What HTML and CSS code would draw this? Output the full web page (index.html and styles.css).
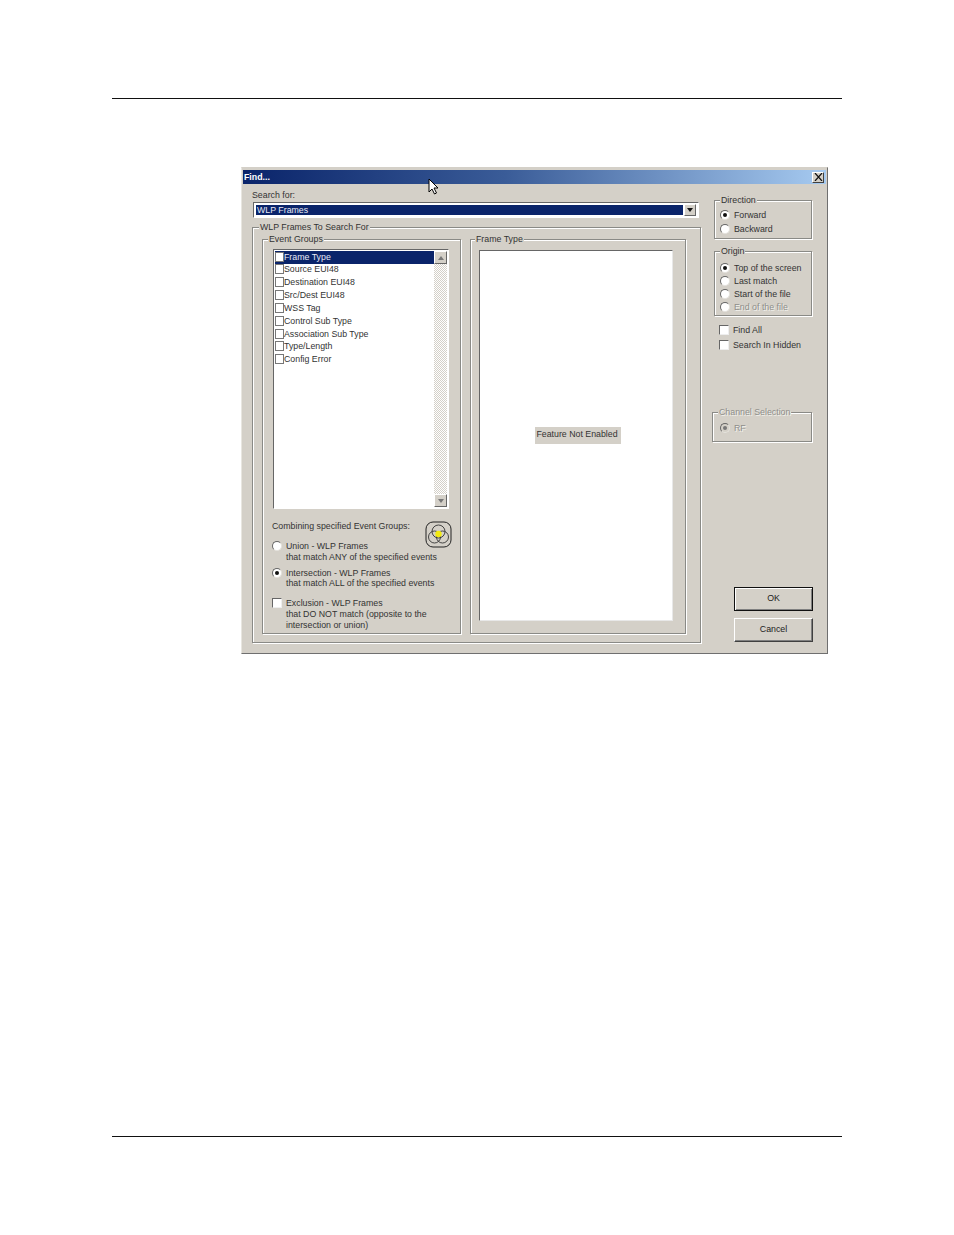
FILE: index.html
```html
<!DOCTYPE html>
<html lang="en">
<head>
<meta charset="utf-8">
<title>Find...</title>
<link rel="stylesheet" href="styles.css">
</head>
<body>
<div class="page-head"></div>
<main class="dialog">
  <div class="titlebar">
    <span class="title-text">Find...</span>
    <span class="close-btn"><svg width="9" height="8" viewBox="0 0 9 8"><path d="M1 0l7 8M8 0L1 8" fill="none" stroke="#111" stroke-width="1.2"/></svg></span>
  </div>
  <svg class="cursor" width="12" height="17" viewBox="0 0 12 17"><path d="M1 1v13l3-3 2.5 5 2-1-2.5-5H10z" fill="#fff" stroke="#000" stroke-width="1"/></svg>
  <div class="dialog-body">
    <section class="left-col">
      <div class="search-label">Search for:</div>
      <div class="combo">
        <span class="combo-value">WLP Frames</span>
        <span class="sb-btn combo-btn"><span class="arrow-down"></span></span>
      </div>
      <fieldset class="group frames-group">
        <legend>WLP Frames To Search For</legend>
        <div class="groups-row">
          <fieldset class="group event-group">
            <legend>Event Groups</legend>
            <div class="listbox">
              <ul class="list-items">
                <li class="list-row selected"><span class="check"></span>Frame Type</li>
                <li class="list-row"><span class="check"></span>Source EUI48</li>
                <li class="list-row"><span class="check"></span>Destination EUI48</li>
                <li class="list-row"><span class="check"></span>Src/Dest EUI48</li>
                <li class="list-row"><span class="check"></span>WSS Tag</li>
                <li class="list-row"><span class="check"></span>Control Sub Type</li>
                <li class="list-row"><span class="check"></span>Association Sub Type</li>
                <li class="list-row"><span class="check"></span>Type/Length</li>
                <li class="list-row"><span class="check"></span>Config Error</li>
              </ul>
              <div class="scrollbar">
                <span class="sb-btn"><span class="arrow-up"></span></span>
                <span class="sb-track"></span>
                <span class="sb-btn"><span class="arrow-down gray"></span></span>
              </div>
            </div>
            <div class="combine-head">
              <span>Combining specified Event Groups:</span>
              <svg class="venn" width="28" height="28" viewBox="0 0 28 28">
                <rect x="1" y="1" width="25" height="25" rx="7" fill="none" stroke="#222" stroke-width="1"/>
                <circle cx="13.5" cy="10.5" r="6.5" fill="none" stroke="#333" stroke-width=".9"/>
                <circle cx="9.5" cy="16" r="6" fill="none" stroke="#333" stroke-width=".9"/>
                <circle cx="17.5" cy="16" r="6" fill="none" stroke="#333" stroke-width=".9"/>
                <circle cx="13.5" cy="13" r="3.2" fill="#f2ea10"/>
              </svg>
            </div>
            <div class="option combine-opt"><span class="radio"></span><span class="opt-text">Union - WLP Frames<br>that match ANY of the specified events</span></div>
            <div class="option combine-opt intersect"><span class="radio on"></span><span class="opt-text">Intersection - WLP Frames<br>that match ALL of the specified events</span></div>
            <div class="option combine-opt exclude"><span class="box"></span><span class="opt-text">Exclusion - WLP Frames<br>that DO NOT match (opposite to the<br>intersection or union)</span></div>
          </fieldset>
          <fieldset class="group type-group">
            <legend>Frame Type</legend>
            <div class="type-panel"><span class="not-enabled">Feature Not Enabled</span></div>
          </fieldset>
        </div>
      </fieldset>
    </section>
    <aside class="right-col">
      <fieldset class="group side-group direction">
        <legend>Direction</legend>
        <div class="option side-opt"><span class="radio on"></span>Forward</div>
        <div class="option side-opt"><span class="radio"></span>Backward</div>
      </fieldset>
      <fieldset class="group side-group origin">
        <legend>Origin</legend>
        <div class="option side-opt"><span class="radio on"></span>Top of the screen</div>
        <div class="option side-opt"><span class="radio"></span>Last match</div>
        <div class="option side-opt"><span class="radio"></span>Start of the file</div>
        <div class="option side-opt disabled"><span class="radio"></span>End of the file</div>
      </fieldset>
      <div class="side-checks">
        <div class="option side-check"><span class="box"></span>Find All</div>
        <div class="option side-check"><span class="box"></span>Search In Hidden</div>
      </div>
      <fieldset class="group side-group channel disabled">
        <legend>Channel Selection</legend>
        <div class="option side-opt"><span class="radio on"></span>RF</div>
      </fieldset>
      <div class="buttons">
        <button class="btn default" type="button">OK</button>
        <button class="btn" type="button">Cancel</button>
      </div>
    </aside>
  </div>
</main>
<div class="page-foot"></div>
</body>
</html>
```
FILE: styles.css
```css
* { box-sizing: border-box; }
html, body { margin: 0; padding: 0; background: #fff; }
body { width: 954px; height: 1235px; overflow: hidden; font: 8.8px/12px "Liberation Sans", Arial, sans-serif; color: #333; }
.page-head { height: 99px; margin: 0 112px; border-bottom: 1px solid #111; }
.page-foot { height: 1px; margin: 482px 112px 0; background: #111; }

.dialog { position: relative; width: 587px; height: 487px; margin: 68px 0 0 241px; padding: 2px 1px 0; background: #d4d0c8; border: 1px solid #6f6f6f; border-top-color: #d4d0c8; border-left-color: #e8e6e0; }
.titlebar { height: 14px; width: 583px; display: flex; align-items: center; justify-content: space-between; padding: 0 2px 0 1px; background: linear-gradient(90deg, #0a246a 0%, #3a5c98 45%, #a6caf0 100%); }
.title-text { color: #fff; font-weight: bold; font-size: 8.8px; }
.close-btn { width: 12px; height: 11px; display: flex; align-items: center; justify-content: center; background: #d4d0c8; border: 1px solid; border-color: #fff #404040 #404040 #fff; }
.cursor { position: absolute; left: 186px; top: 10px; }

.dialog-body { display: flex; }
.left-col { width: 449px; margin-left: 9px; }
.search-label { height: 12px; margin-top: 5px; }
.combo { width: 446px; height: 16px; margin: 1px 0 0 1px; display: flex; padding: 2px; border: 1px solid; border-color: #666 #fff #fff #666; background: #fff; }
.combo-value { flex: 1; background: #0a246a; color: #e8e8f4; padding-left: 1px; line-height: 11px; }
.sb-btn { flex: none; width: 13px; height: 13px; display: flex; align-items: center; justify-content: center; background: #d4d0c8; border: 1px solid; border-color: #fff #666 #666 #fff; }
.combo-btn { width: 12px; height: 12px; margin-left: 1px; margin-top: -1px; }
.arrow-down { width: 0; height: 0; border: 3px solid transparent; border-top: 4px solid #111; border-bottom: 0; }
.arrow-down.gray { border-top-color: #777; }
.arrow-up { width: 0; height: 0; border: 3px solid transparent; border-bottom: 4px solid #777; border-top: 0; }

.group { margin: 0; padding: 0; min-width: 0; border: 1px solid #8a8a86; box-shadow: 1px 1px 0 #fff, inset 1px 1px 0 #fff; }
.group legend { padding: 0 1px; background: #d4d0c8; height: 12px; line-height: 12px; }
.frames-group { width: 449px; height: 422px; margin-top: 3px; padding: 0 0 0 9px; }
.frames-group > legend { margin-left: -3px; }
.groups-row { display: flex; gap: 9px; }
.event-group { width: 199px; height: 401px; padding: 0 0 0 10px; }
.event-group > legend { margin-left: -5px; }
.type-group { width: 216px; height: 401px; padding: 5px 0 0 8px; }
.type-group > legend { margin-left: -4px; }

.listbox { width: 176px; height: 260px; margin-top: 4px; display: flex; padding: 1px; border: 1px solid; border-color: #666 #fff #fff #666; background: #fff; }
.list-items { flex: 1; margin: 0; padding: 0; list-style: none; }
.list-row { height: 12.85px; padding-bottom: 2px; display: flex; align-items: center; white-space: nowrap; }
.list-row.selected { height: 13px; background: #0a246a; color: #e8e8f4; }
.check { flex: none; width: 9px; height: 10px; background: #fff; border: 1px solid #777; }
.scrollbar { width: 13px; display: flex; flex-direction: column; }
.sb-track { flex: 1; background: repeating-conic-gradient(#fff 0 25%, #d4d0c8 0 50%) 0 0 / 2px 2px; }

.combine-head { width: 181px; height: 21px; margin: 11px 0 0 -1px; display: flex; justify-content: space-between; white-space: nowrap; }
.venn { flex: none; margin-top: 1px; }
.option { display: flex; align-items: center; white-space: nowrap; }
.radio { flex: none; width: 10px; height: 10px; border-radius: 50%; background: #fff; border: 1px solid; border-color: #666 #e4e2dc #e4e2dc #666; display: flex; align-items: center; justify-content: center; }
.radio.on::after { content: ""; width: 4px; height: 4px; border-radius: 50%; background: #111; }
.box { flex: none; width: 10px; height: 10px; background: #fff; border: 1px solid; border-color: #666 #eee #eee #666; }
.combine-opt { align-items: flex-start; line-height: 10.6px; margin-left: -1px; }
.combine-opt .opt-text { margin-left: 4px; }
.intersect { margin-top: 5.4px; }
.exclude { margin-top: 9.6px; }

.type-panel { width: 194px; height: 371px; display: flex; align-items: center; justify-content: center; background: #fff; border: 1px solid; border-color: #666 #e8e8e8 #e8e8e8 #666; }
.not-enabled { height: 17px; padding: 0 3px 0 1px; margin-left: 4px; line-height: 14px; background: #d4d0c8; }

.right-col { width: 101px; margin-left: 11px; display: flex; flex-direction: column; }
.side-group { width: 98px; margin-left: 2px; padding: 0 0 0 5px; }
.side-group > legend { margin-left: 0; }
.direction { height: 45px; margin-top: 10px; }
.origin { height: 71px; margin-top: 6px; }
.side-opt { height: 13px; gap: 4px; }
.direction .side-opt { height: 14px; }
.direction .side-opt:first-of-type { margin-top: 2px; }
.origin .side-opt:first-of-type { margin-top: 4px; }
.disabled, .disabled legend { color: #8e8e8a; text-shadow: 1px 1px 0 #f2f1ec; }
.side-checks { margin: 6px 0 0 7px; }
.side-check { height: 15px; gap: 4px; }
.channel { width: 100px; margin-left: 0; height: 36px; margin-top: 54px; padding-left: 7px; }
.channel > legend { margin-left: -2px; }
.channel .radio { background: #d4d0c8; }
.channel .radio.on::after { background: #777; }
.channel .side-opt { margin-top: 3px; }
.buttons { display: flex; flex-direction: column; gap: 7px; margin: 145px 0 0 22px; }
.btn { width: 79px; height: 24px; padding: 0 0 2px; font: inherit; color: #222; background: #d4d0c8; border: 1px solid; border-color: #fff #404040 #404040 #fff; box-shadow: inset -1px -1px 0 #808080; }
.btn.default { border: 1px solid #111; box-shadow: inset 1px 1px 0 #fff, inset -1px -1px 0 #808080; }
```
